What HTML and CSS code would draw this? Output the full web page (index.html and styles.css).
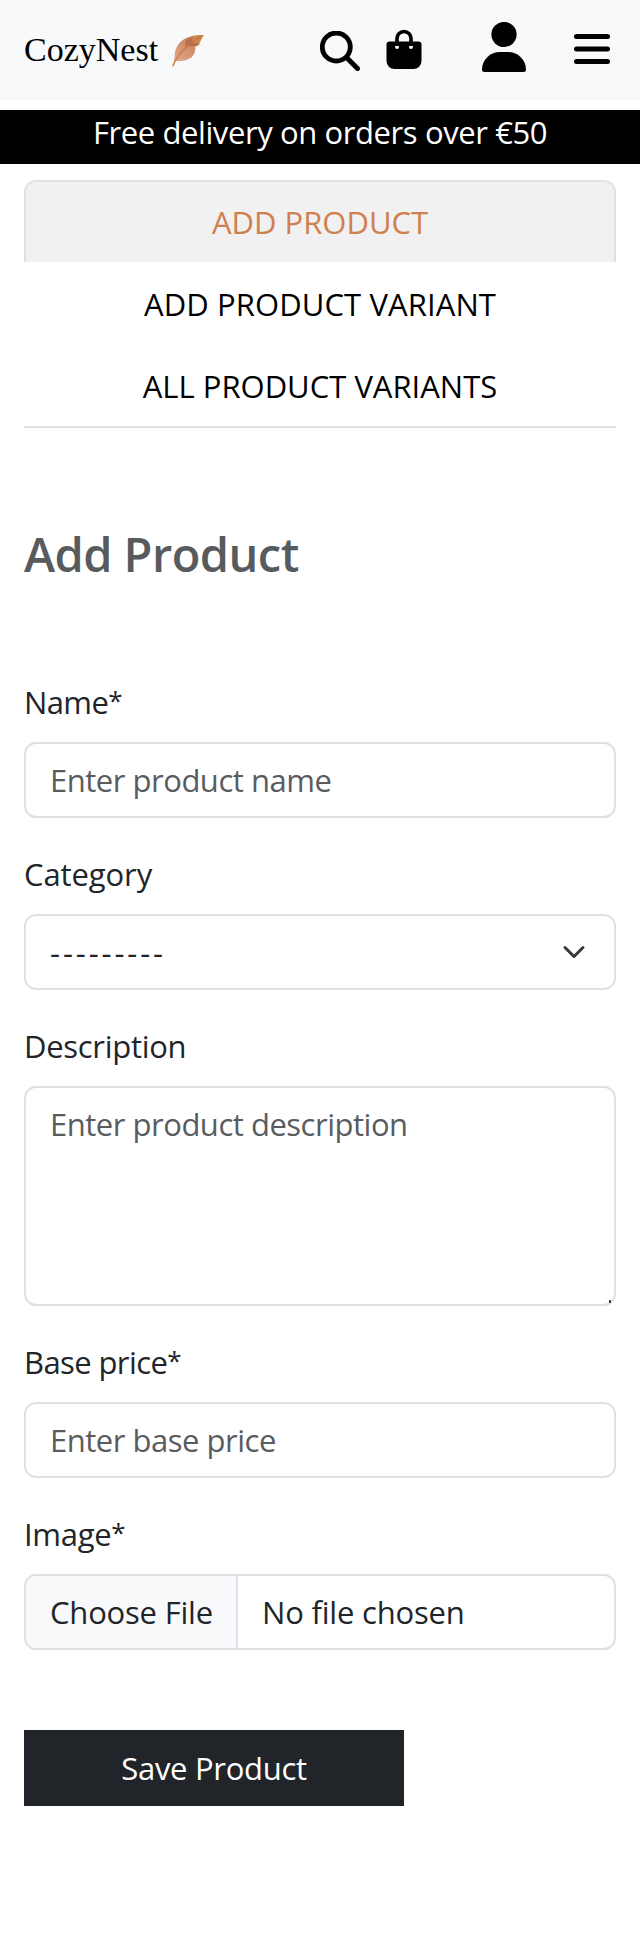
FILE: index.html
```html
<!DOCTYPE html>
<html lang="en">
<head>
<meta charset="utf-8">
<title>CozyNest - Add Product</title>
<link rel="stylesheet" href="styles.css">
</head>
<body>
<header class="navbar">
  <a class="brand"><span class="brand-name">CozyNest</span>
    <svg class="leaf" viewBox="0 0 34 34">
      <defs><linearGradient id="leafFill" x1="1" y1="0" x2="0.2" y2="1"><stop offset="0" stop-color="#c9813f"/><stop offset="0.45" stop-color="#cf8c65"/><stop offset="1" stop-color="#e6aa96"/></linearGradient></defs>
      <path d="M33 1C23 1 13 2 7 11C3 17 4 22 3 27L1 32L2 33L4 27C9 27 15 27 17 25L20 24C23 21 25 17 24 13L28 11C29 7 31 4 33 1Z" fill="url(#leafFill)"/>
      <path d="M15 6L22 3L21 8L28 10L25 12L14 12Z" fill="#a9624a" opacity=".65"/>
      <path d="M2 32C6 21 14 13 29 3" fill="none" stroke="#c87838" stroke-width="1.2"/>
    </svg>
  </a>
  <nav class="actions">
    <svg class="search" viewBox="0 0 40 40"><g fill="none" stroke="#000" stroke-linecap="round"><circle cx="16.300" cy="16" r="14" stroke-width="4.800"/><path d="M27 27L37.500 37.500" stroke-width="5"/></g></svg>
    <svg class="bag" viewBox="0 0 36 40"><path d="M11 17V9.500a7 7 0 0 1 14 0V17" fill="none" stroke="#000" stroke-width="3.600"/><path fill-rule="evenodd" d="M3.500 12.500H32.500a3 3 0 0 1 3 3V32a8 8 0 0 1-8 8H8.500a8 8 0 0 1-8-8V15.500a3 3 0 0 1 3-3ZM11 16a2 2 0 1 0 0 4a2 2 0 0 0 0-4ZM25 16a2 2 0 1 0 0 4a2 2 0 0 0 0-4Z"/></svg>
    <svg class="person" viewBox="0 0 44 50"><circle cx="22" cy="12.500" r="12.600"/><path d="M18 30H26A18 17.500 0 0 1 44 47.500Q44 50 41.500 50H2.500Q0 50 0 47.500A18 17.500 0 0 1 18 30Z"/></svg>
    <svg class="menu" viewBox="0 0 36 30"><path d="M2.500 2.500H33.500M2.500 15H33.500M2.500 27.500H33.500" fill="none" stroke="#000" stroke-width="5" stroke-linecap="round"/></svg>
  </nav>
</header>
<div class="banner"><span>Free delivery on orders over €50</span></div>
<main class="content">
  <nav class="tabs">
    <a class="tab active">ADD PRODUCT</a>
    <a class="tab wide">ADD PRODUCT VARIANT</a>
    <a class="tab">ALL PRODUCT VARIANTS</a>
  </nav>
  <h1 class="title">Add Product</h1>
  <form class="form">
    <div class="field"><label class="label tight">Name<span class="star">*</span></label><input class="control" type="text" placeholder="Enter product name"></div>
    <div class="field"><label class="label loose">Category</label>
      <div class="control select"><span class="dashes">---------</span>
        <svg class="chevron" viewBox="0 0 16 16"><path d="m2 5 6 6 6-6" fill="none" stroke="#343a40" stroke-width="2" stroke-linecap="round" stroke-linejoin="round"/></svg>
      </div></div>
    <div class="field"><label class="label">Description</label>
      <div class="area-wrap"><textarea class="control area" placeholder="Enter product description"></textarea><i class="grip"></i></div></div>
    <div class="field"><label class="label tight">Base price<span class="star">*</span></label><input class="control" type="text" placeholder="Enter base price"></div>
    <div class="field"><label class="label">Image<span class="star">*</span></label>
      <div class="control file"><span class="choose">Choose File</span><span class="chosen">No file chosen</span></div></div>
    <button class="save" type="button">Save Product</button>
  </form>
</main>
</body>
</html>
```
FILE: styles.css
```css
* { box-sizing: border-box; }
body {
  margin: 0;
  background: #fff;
  color: #212529;
  font: 31px/48px "Open Sans", "Noto Sans", sans-serif;
  letter-spacing: -0.3px;
}
.navbar {
  height: 100px;
  padding: 0 30px 0 24px;
  display: flex;
  justify-content: space-between;
  background: #f8f9fb;
}
.brand { display: flex; align-items: flex-start; padding-top: 26px; color: #000; }
.brand-name { font: 34px/48px "Liberation Serif", serif; letter-spacing: 0; width: 147px; }
.leaf { width: 34px; height: 34px; margin-top: 8px; }
.actions { display: flex; align-items: flex-start; }
.search { width: 40px; height: 40px; margin: 31px 26px 0 0; }
.bag { width: 36px; height: 40px; margin: 29px 60px 0 0; }
.person { width: 44px; height: 50px; margin: 22px 48px 0 0; }
.menu { width: 36px; height: 30px; margin-top: 34px; }
.banner {
  height: 54px;
  margin-top: 10px;
  background: #000;
  color: #fff;
  text-align: center;
  line-height: 45px;
  letter-spacing: -0.4px;
}
.content { padding: 16px 24px 0; }
.tabs { border-bottom: 2px solid #dee2e6; letter-spacing: 0; }
.tab {
  display: block;
  height: 82px;
  padding: 18px 0 16px;
  color: #000;
  text-align: center;
}
.tab.wide { letter-spacing: 0.1px; }
.tab.active {
  border: 2px solid #dee2e6;
  border-bottom: 0;
  border-radius: 12px 12px 0 0;
  padding-top: 16px;
  background: #f1f1f1;
  color: #d08050;
}
.title {
  margin: 96px 0 94px;
  font-size: 47px;
  line-height: 60px;
  font-weight: 600;
  letter-spacing: -0.55px;
  color: #575b5e;
}
.form { display: flex; flex-direction: column; gap: 32px; }
.field { display: flex; flex-direction: column; gap: 16px; }
.label { display: block; height: 48px; }
.label.tight { letter-spacing: -0.6px; }
.label.loose { letter-spacing: -0.1px; }
.star { font-size: 26px; line-height: 1; vertical-align: 4px; }
.control {
  width: 100%;
  height: 76px;
  padding: 12px 24px;
  border: 2px solid #dee2e6;
  border-radius: 12px;
  background: #fff;
  font: inherit;
  letter-spacing: -0.2px;
  color: #212529;
}
.control::placeholder { color: #595c5f; opacity: 1; letter-spacing: -0.48px; }
.select { display: flex; justify-content: space-between; align-items: center; }
.dashes { letter-spacing: 2.9px; }
.chevron { width: 24px; height: 24px; margin-right: 4px; }
.area-wrap { position: relative; height: 220px; }
.area { height: 220px; display: block; resize: none; }
.grip { position: absolute; right: 5px; bottom: 3px; width: 2px; height: 3px; background: #444; }
.file { display: flex; padding: 0; overflow: hidden; }
.choose {
  width: 212px;
  padding: 12px 0 12px 24px;
  border-right: 2px solid #dee2e6;
  background: #f8f9fb;
}
.chosen { padding: 12px 24px; }
.save {
  width: 380px;
  height: 76px;
  margin-top: 48px;
  padding: 0;
  border: 0;
  background: #212529;
  color: #fff;
  font: inherit;
  letter-spacing: inherit;
}
```
